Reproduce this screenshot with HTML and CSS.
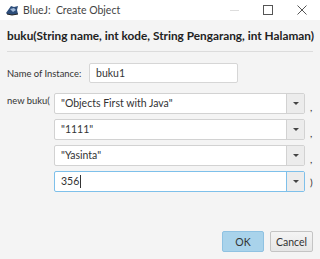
FILE: index.html
```html
<!DOCTYPE html>
<html>
<head>
  <title>BlueJ: Create Object</title>
  <link rel="stylesheet" href="styles.css">
</head>
<body>
  <div class="window">
    <div class="titlebar">
      <svg class="app-icon" width="14" height="12" viewBox="0 0 14 12">
        <path d="M1 9 L6 2 L9 3 L13 2 L12 6 L13 10 L7 11 L2 10 Z" fill="#2d4d7a"/>
        <path d="M5 5 L9 4 L11 6 L8 8 Z" fill="#9fb8d8"/>
        <path d="M2 10 L7 11 L13 10" stroke="#222" stroke-width="1" fill="none"/>
      </svg>
      <span class="title">BlueJ:&nbsp; Create Object</span>
      <div class="win-controls">
        <span class="ctl min"></span>
        <span class="ctl max"></span>
        <span class="ctl close">
          <svg width="10" height="10" viewBox="0 0 10 10"><path d="M0.5 0.5 L9.5 9.5 M9.5 0.5 L0.5 9.5" stroke="#555" stroke-width="1"/></svg>
        </span>
      </div>
    </div>

    <div class="content">
      <h1 class="signature">buku(String name, int kode, String Pengarang, int Halaman)</h1>
      <hr class="sep">

      <div class="name-row">
        <label class="label">Name of Instance:</label>
        <input class="text-field" type="text" value="buku1">
      </div>

      <div class="args">
        <div class="args-label">new buku(</div>
        <div class="arg-list">
          <div class="arg-row">
            <div class="combo"><span class="combo-text">"Objects First with Java"</span><span class="combo-btn"><span class="arrow"></span></span></div>
            <span class="punct">,</span>
          </div>
          <div class="arg-row">
            <div class="combo"><span class="combo-text">"1111"</span><span class="combo-btn"><span class="arrow"></span></span></div>
            <span class="punct">,</span>
          </div>
          <div class="arg-row">
            <div class="combo"><span class="combo-text">"Yasinta"</span><span class="combo-btn"><span class="arrow"></span></span></div>
            <span class="punct">,</span>
          </div>
          <div class="arg-row">
            <div class="combo focused"><span class="combo-text">356<span class="caret"></span></span><span class="combo-btn"><span class="arrow"></span></span></div>
            <span class="punct paren">)</span>
          </div>
        </div>
      </div>

      <div class="buttons">
        <button class="btn ok">OK</button>
        <button class="btn">Cancel</button>
      </div>
    </div>
  </div>
</body>
</html>
```

FILE: styles.css
```css
:root {
  --dialog-bg: #f4f4f4;
  --field-border: #c8c8c8;
  --text: #333;
  --focus: #7ec0ea;
}

body {
  margin: 0;
  font-family: Lato, 'Open Sans', sans-serif;
  color: var(--text);
  background: var(--dialog-bg);
}

.window {
  width: 320px;
  height: 259px;
  display: flex;
  flex-direction: column;
  background: var(--dialog-bg);
  overflow: hidden;
}

.titlebar {
  height: 20px;
  flex-shrink: 0;
  background: #fff;
  display: flex;
  align-items: center;
  padding-left: 5px;
}

.app-icon {
  margin-right: 4px;
}

.title {
  font-size: 10.5px;
  color: #444;
}

.win-controls {
  margin-left: auto;
  display: flex;
  align-items: center;
  height: 20px;
}

.ctl {
  width: 34px;
  display: flex;
  justify-content: center;
  align-items: center;
  height: 20px;
}

.min::before {
  content: "";
  width: 9px;
  height: 1px;
  background: #ddd;
}

.max::before {
  content: "";
  width: 8px;
  height: 8px;
  border: 1px solid #555;
}

.close {
  margin-right: 1px;
}

.content {
  flex: 1;
  display: flex;
  flex-direction: column;
  padding: 0 7px;
}

.signature {
  font-size: 11.8px;
  font-weight: bold;
  color: #222;
  margin: 7px 0 0;
  height: 17px;
  line-height: 17px;
  white-space: nowrap;
}

.sep {
  border: none;
  height: 1px;
  background: #dcdcdc;
  margin: 7px 0 0;
}

.name-row {
  display: flex;
  align-items: center;
  margin-top: 11px;
}

.label {
  font-size: 9.4px;
  width: 82px;
  flex-shrink: 0;
  white-space: nowrap;
}

.text-field {
  width: 149px;
  height: 20px;
  box-sizing: border-box;
  border: 1px solid #d6d6d6;
  border-radius: 2px;
  padding: 0 6px;
  font-family: inherit;
  font-size: 10.5px;
  color: #333;
  background: #fff;
  margin: 0;
}

.args {
  display: flex;
  margin-top: 10px;
}

.args-label {
  font-size: 9.4px;
  width: 47px;
  flex-shrink: 0;
  white-space: nowrap;
  padding-top: 2px;
}

.arg-list {
  display: flex;
  flex-direction: column;
  gap: 5px;
}

.arg-row {
  display: flex;
  align-items: center;
}

.combo {
  width: 251px;
  height: 21px;
  flex-shrink: 0;
  box-sizing: border-box;
  border: 1px solid #d2d2d2;
  border-radius: 2px;
  background: #fff;
  display: flex;
}

.combo.focused {
  border-color: var(--focus);
}

.combo-text {
  flex: 1;
  font-size: 10.5px;
  line-height: 19px;
  padding-left: 6px;
  display: flex;
  align-items: center;
}

.caret {
  display: inline-block;
  width: 1px;
  height: 13px;
  background: #333;
  margin-left: 1px;
}

.combo-btn {
  width: 17px;
  border-left: 1px solid #d2d2d2;
  background: #ececec;
  display: flex;
  align-items: center;
  justify-content: center;
}

.combo.focused .combo-btn {
  border-left-color: var(--focus);
}

.arrow {
  width: 0;
  height: 0;
  border-left: 3px solid transparent;
  border-right: 3px solid transparent;
  border-top: 3px solid #444;
}

.punct {
  font-size: 10px;
  margin-left: 5px;
  padding-top: 6px;
}

.punct.paren {
  padding-top: 0;
}

.buttons {
  display: flex;
  justify-content: flex-end;
  gap: 6px;
  margin-top: auto;
  margin-bottom: 7px;
}

.btn {
  height: 21px;
  box-sizing: border-box;
  border: 1px solid #c4c4c4;
  border-radius: 2px;
  background: linear-gradient(#f4f4f4, #e6e6e6);
  font-family: inherit;
  font-size: 10.5px;
  color: #333;
  padding: 0;
  width: 43px;
}

.btn.ok {
  width: 42px;
  background: #a9d3eb;
  border-color: #8fc2e2;
}
```
